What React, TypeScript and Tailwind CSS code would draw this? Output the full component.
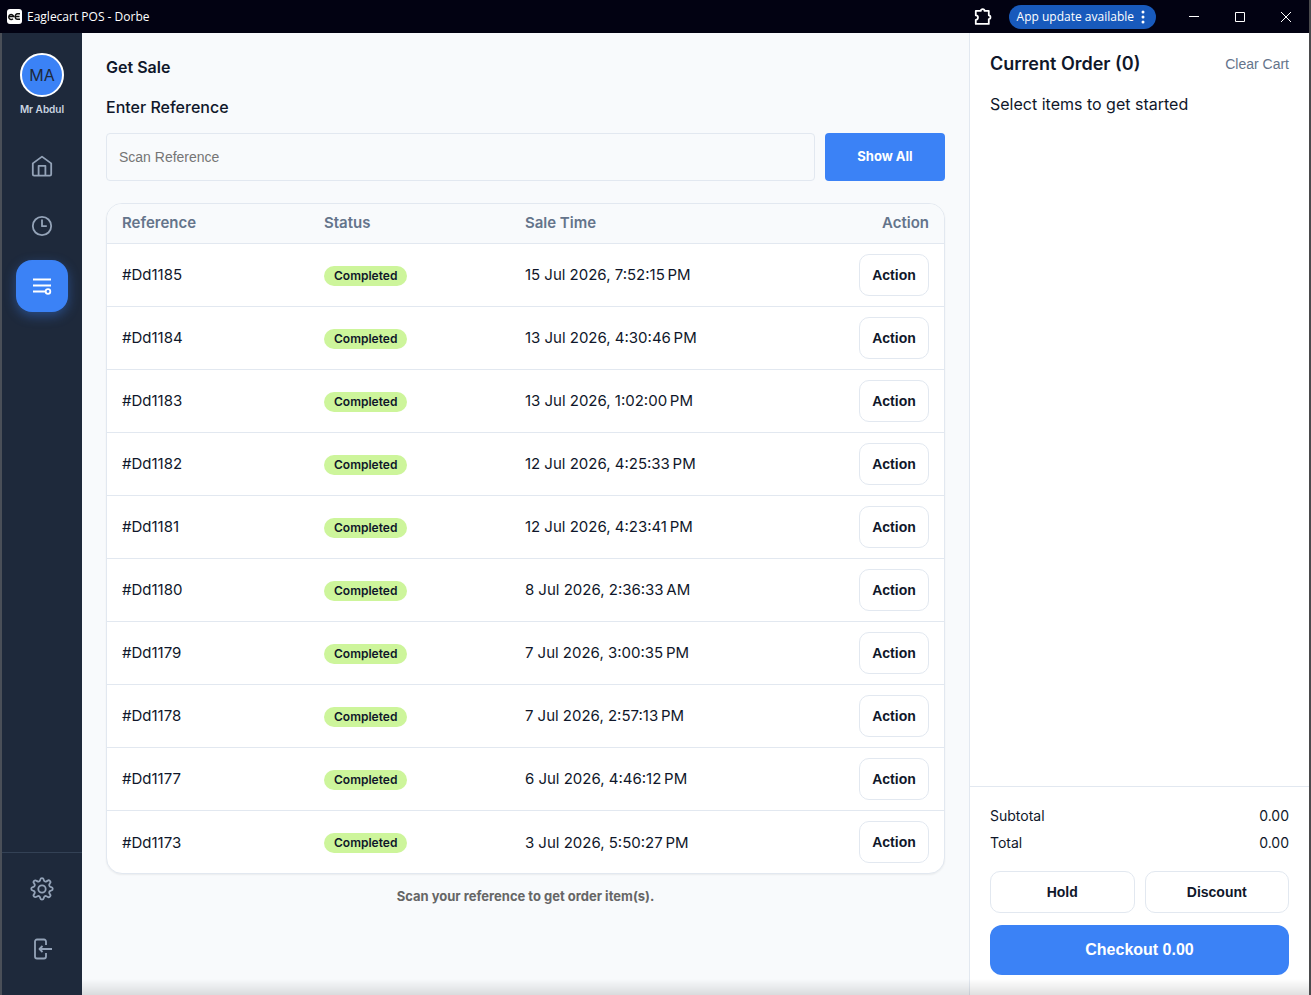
import { useState } from "react";
import type { ReactNode } from "react";

const sales = [
  { reference: "#Dd1185", time: "15 Jul 2026, 7:52:15\u202fPM" },
  { reference: "#Dd1184", time: "13 Jul 2026, 4:30:46\u202fPM" },
  { reference: "#Dd1183", time: "13 Jul 2026, 1:02:00\u202fPM" },
  { reference: "#Dd1182", time: "12 Jul 2026, 4:25:33\u202fPM" },
  { reference: "#Dd1181", time: "12 Jul 2026, 4:23:41\u202fPM" },
  { reference: "#Dd1180", time: "8 Jul 2026, 2:36:33\u202fAM" },
  { reference: "#Dd1179", time: "7 Jul 2026, 3:00:35\u202fPM" },
  { reference: "#Dd1178", time: "7 Jul 2026, 2:57:13\u202fPM" },
  { reference: "#Dd1177", time: "6 Jul 2026, 4:46:12\u202fPM" },
  { reference: "#Dd1173", time: "3 Jul 2026, 5:50:27\u202fPM" },
];

export default function App() {
  return (
    <div className="min-h-screen flex flex-col border-r-2 border-[#4a4a4c] bg-[#f8fafc] text-[#0f172a] font-[Inter,sans-serif]">
      <TitleBar />
      <div className="flex-1 flex">
        <Sidebar />
        <SalePanel />
        <OrderPanel />
      </div>
      {/* Window shadow along the bottom edge */}
      <div className="fixed bottom-0 left-[82px] right-0.5 h-4 bg-linear-to-b from-transparent to-black/12 pointer-events-none" />
    </div>
  );
}

function TitleBar() {
  return (
    <header className="h-[33px] shrink-0 flex items-center bg-[#020212] text-white text-xs font-['Open_Sans',sans-serif]">
      <div className="flex items-center gap-[5px] pl-[7px]">
        <AppLogo />
        <span>Eaglecart POS - Dorbe</span>
      </div>
      <div className="ml-auto flex items-center">
        <button aria-label="Extensions" className="mr-4">
          <PuzzleIcon />
        </button>
        <button className="h-6 flex items-center gap-1 rounded-full bg-[#185abc] px-2 mr-[15px]">
          App update available
          <svg width="10" height="16" viewBox="0 0 10 16" fill="currentColor">
            <circle cx="5" cy="3" r="1.5" />
            <circle cx="5" cy="8" r="1.5" />
            <circle cx="5" cy="13" r="1.5" />
          </svg>
        </button>
        <WindowButton label="Minimize">
          <path d="M0 4.5h10" />
        </WindowButton>
        <WindowButton label="Maximize">
          <path d="M.5 .5h9v9h-9z" />
        </WindowButton>
        <WindowButton label="Close">
          <path d="M0 0l10 10M10 0L0 10" />
        </WindowButton>
      </div>
    </header>
  );
}

function WindowButton({ label, children }: { label: string; children: ReactNode }) {
  return (
    <button aria-label={label} className="w-[46px] h-8 flex items-center justify-center">
      <svg width="10" height="10" viewBox="0 0 10 10" fill="none" stroke="currentColor">
        {children}
      </svg>
    </button>
  );
}

function Sidebar() {
  return (
    <aside className="w-[82px] shrink-0 flex flex-col border-l-2 border-[#4a4f58] bg-[#1e293b] text-[#94a3b8]">
      <div className="flex flex-col items-center pt-5">
        <div className="size-11 flex items-center justify-center rounded-full border-2 border-white bg-[#3b82f6] text-[#1e293b]">
          MA
        </div>
        <div className="mt-1 text-[10px] leading-4 font-semibold text-[#cbd5e1]">
          Mr Abdul
        </div>
      </div>
      <nav className="mt-[23px] flex flex-col items-center gap-2">
        <NavLink label="Home">
          <path d="M2.800 9.400 12 2.600l9.200 6.800V20.300a1.300 1.300 0 0 1-1.300 1.300H4.100a1.300 1.300 0 0 1-1.300-1.300z" />
          <path d="M8.600 21.400v-9.600h6.800v9.600" />
        </NavLink>
        <NavLink label="History">
          <circle cx="12" cy="12" r="9.2" />
          <path d="M12 5.500v6.700h4.800" />
        </NavLink>
        <NavLink label="Sales" active>
          <path d="M3 5.500h18M3 11.500h18M3 17.500h12.500" strokeWidth="2" />
          <circle cx="18" cy="17.5" r="2.3" />
        </NavLink>
      </nav>
      <div className="mt-auto flex flex-col items-center gap-2 border-t border-[#334155] pt-2.5 pb-5">
        <NavLink label="Settings">
          <path d="M10.3 2.4a1.75 1.75 0 0 1 3.4 0l.3 1a1.75 1.75 0 0 0 2.5 1l.9-.5a1.75 1.75 0 0 1 2.5 2.5l-.5.9a1.75 1.75 0 0 0 1 2.5l1 .3a1.75 1.75 0 0 1 0 3.4l-1 .3a1.75 1.75 0 0 0-1 2.5l.5.9a1.75 1.75 0 0 1-2.5 2.5l-.9-.5a1.75 1.75 0 0 0-2.5 1l-.3 1a1.75 1.75 0 0 1-3.4 0l-.3-1a1.75 1.75 0 0 0-2.5-1l-.9.5a1.75 1.75 0 0 1-2.5-2.5l.5-.9a1.75 1.75 0 0 0-1-2.5l-1-.3a1.75 1.75 0 0 1 0-3.4l1-.3a1.75 1.75 0 0 0 1-2.5l-.5-.9a1.75 1.75 0 0 1 2.5-2.5l.9.5a1.75 1.75 0 0 0 2.500-1z" />
          <circle cx="12" cy="12" r="3.7" />
        </NavLink>
        <NavLink label="Log out">
          <path d="M16 8V4.500A2 2 0 0 0 14 2.500H7a2 2 0 0 0-2 2v15a2 2 0 0 0 2 2h7a2 2 0 0 0 2-2V16" />
          <path d="M22 12H9.500M12.500 9l-3 3 3 3" />
        </NavLink>
      </div>
    </aside>
  );
}

function NavLink({
  label,
  active = false,
  children,
}: {
  label: string;
  active?: boolean;
  children: ReactNode;
}) {
  return (
    <a
      href="#"
      aria-label={label}
      className={`size-[52px] flex items-center justify-center rounded-2xl ${
        active ? "bg-[#3b82f6] text-white shadow-[0_4px_12px_rgba(59,130,246,0.4)]" : ""
      }`}
    >
      <svg
        width="24"
        height="24"
        viewBox="0 0 24 24"
        fill="none"
        stroke="currentColor"
        strokeWidth="1.8"
        strokeLinejoin="round"
      >
        {children}
      </svg>
    </a>
  );
}

function SalePanel() {
  const [reference, setReference] = useState("");

  return (
    <main className="flex-1 min-w-0 p-6">
      <h1 className="text-base leading-5 font-semibold">Get Sale</h1>
      <label htmlFor="reference" className="mt-5 block text-base leading-5 font-medium">
        Enter Reference
      </label>
      <div className="mt-4 flex gap-2.5">
        <input
          id="reference"
          value={reference}
          onChange={(e) => setReference(e.target.value)}
          placeholder="Scan Reference"
          className="h-12 flex-1 min-w-0 rounded border border-[#e2e8f0] px-3 text-sm font-['Liberation_Sans',sans-serif] placeholder:text-[#757575]"
        />
        <button className="h-12 w-[120px] rounded bg-[#3b82f6] text-[13px] font-bold text-white">
          Show All
        </button>
      </div>

      <div className="mt-[22px] overflow-hidden rounded-2xl border border-[#e2e8f0] bg-white shadow-[0_1px_2px_rgba(0,0,0,0.06)]">
        <table className="w-full table-fixed text-left">
          <thead className="bg-[#f8fafc] text-[15px] text-[#64748b]">
            <tr className="h-[39px] border-b border-[#e2e8f0]">
              <th className="w-[217px] pl-[15px] font-semibold">Reference</th>
              <th className="w-[24%] font-semibold">Status</th>
              <th className="w-[24%] font-semibold">Sale Time</th>
              <th className="pr-[15px] text-right font-semibold">Action</th>
            </tr>
          </thead>
          <tbody className="text-[15px]">
            {sales.map((sale) => (
              <tr key={sale.reference} className="h-[63px] border-b border-[#e2e8f0] last:border-b-0">
                <td className="pt-0.5 pl-[15px]">{sale.reference}</td>
                <td className="pt-0.5">
                  <span className="inline-block rounded-full bg-[#cdf59b] px-2.5 text-xs leading-5 font-semibold align-middle">
                    Completed
                  </span>
                </td>
                <td className="pt-0.5">{sale.time}</td>
                <td className="pr-[15px] text-right">
                  <OutlineButton className="w-[70px]">Action</OutlineButton>
                </td>
              </tr>
            ))}
          </tbody>
        </table>
      </div>
      <p className="mt-3 text-center text-[13px] leading-5 font-bold text-[#666666]">
        Scan your reference to get order item(s).
      </p>
    </main>
  );
}

function OrderPanel() {
  return (
    <aside className="w-[340px] shrink-0 flex flex-col border-l border-[#e2e8f0] bg-white">
      <div className="p-5">
        <div className="flex items-center justify-between">
          <h2 className="text-lg leading-[22px] font-semibold">Current Order (0)</h2>
          <button className="text-sm leading-5 text-[#64748b] font-['Liberation_Sans',sans-serif]">
            Clear Cart
          </button>
        </div>
        <p className="mt-[19px] text-base leading-5">Select items to get started</p>
      </div>
      <div className="mt-auto border-t border-[#e2e8f0] px-5 pt-[19px] pb-5">
        <dl className="text-sm leading-5">
          <div className="flex justify-between">
            <dt>Subtotal</dt>
            <dd>0.00</dd>
          </div>
          <div className="mt-[7px] flex justify-between">
            <dt>Total</dt>
            <dd>0.00</dd>
          </div>
        </dl>
        <div className="mt-[18px] flex gap-2.5">
          <OutlineButton className="flex-1">Hold</OutlineButton>
          <OutlineButton className="flex-1">Discount</OutlineButton>
        </div>
        <button className="mt-3 h-[50px] w-full rounded-xl bg-[#3b82f6] text-base font-bold text-white font-['Liberation_Sans',sans-serif]">
          Checkout 0.00
        </button>
      </div>
    </aside>
  );
}

function OutlineButton({ className = "", children }: { className?: string; children: ReactNode }) {
  return (
    <button
      className={`h-[42px] rounded-[10px] border border-[#e2e8f0] bg-white text-sm font-bold align-middle font-['Liberation_Sans',sans-serif] ${className}`}
    >
      {children}
    </button>
  );
}

function AppLogo() {
  return (
    <svg width="15" height="15" viewBox="0 0 15 15" fill="none">
      <rect width="15" height="15" rx="3" fill="#fff" />
      <path
        d="M2 7.500H6.700A2.500 2.500 0 1 0 6 9.800M13 4.800H10.500A2.300 2.300 0 0 0 8.300 7.200V8A2.300 2.300 0 0 0 10.500 10.300H13M9 7.500h3.500"
        stroke="#111"
        strokeWidth="1.4"
      />
    </svg>
  );
}

function PuzzleIcon() {
  return (
    <svg width="20" height="20" viewBox="0 0 18 18" fill="none" stroke="currentColor" strokeWidth="1.6">
      <path
        d="M2.500 3.500H7a1.700 1.500 0 0 1 3.400 0H14.200V7.500a1.500 1.700 0 0 1 0 3.400V15.200H2.500V11.500a2 2 0 0 0 0-4z"
        strokeLinejoin="round"
      />
    </svg>
  );
}
